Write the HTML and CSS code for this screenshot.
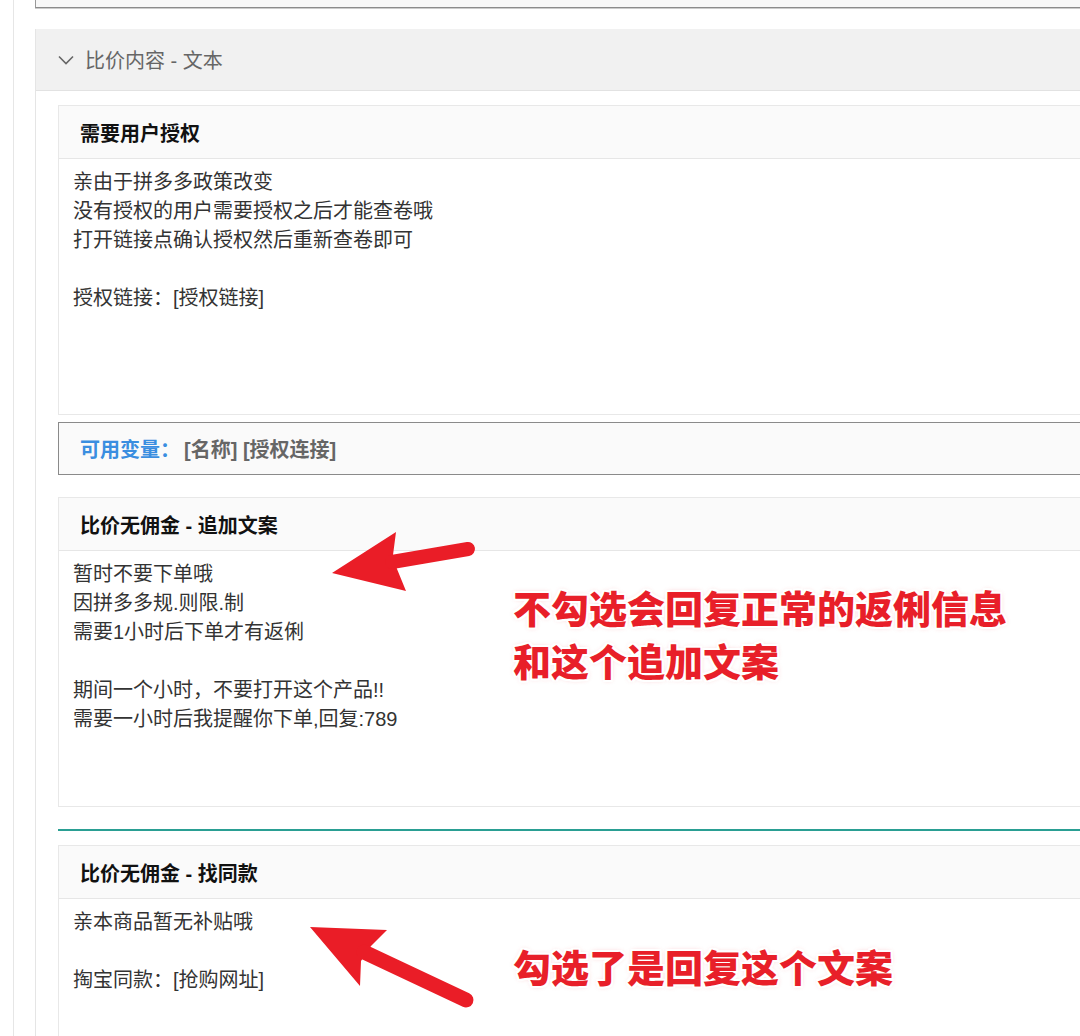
FILE: index.html
```html
<!DOCTYPE html>
<html lang="zh-CN">
<head>
    <meta charset="UTF-8">
    <meta name="viewport" content="width=device-width, initial-scale=1.0">
    <title>比价内容 - 文本</title>
    <link rel="stylesheet" href="styles.css">
</head>
<body>
    <div class="page">
        <div class="top-box"></div>

        <div class="section">
            <div class="section-head">
                <svg class="chevron" width="16" height="10" viewBox="0 0 16 10">
                    <polyline points="1,1.5 8,8.5 15,1.5" fill="none" stroke="#666" stroke-width="1.6"/>
                </svg>
                <span>比价内容 - 文本</span>
            </div>

            <div class="section-body">
                <div class="card">
                    <div class="card-head">需要用户授权</div>
                    <div class="card-body">亲由于拼多多政策改变
没有授权的用户需要授权之后才能查卷哦
打开链接点确认授权然后重新查卷即可

授权链接：[授权链接]</div>
                </div>

                <div class="vars">
                    <span class="vars-label">可用变量：</span>
                    <span class="vars-list">[名称] [授权连接]</span>
                </div>

                <div class="card card-gap">
                    <div class="card-head">比价无佣金 - 追加文案</div>
                    <div class="card-body">暂时不要下单哦
因拼多多规.则限.制
需要1小时后下单才有返俐

期间一个小时，不要打开这个产品!!
需要一小时后我提醒你下单,回复:789</div>
                </div>

                <div class="divider"></div>

                <div class="card">
                    <div class="card-head">比价无佣金 - 找同款</div>
                    <div class="card-body">亲本商品暂无补贴哦

掏宝同款：[抢购网址]</div>
                </div>
            </div>
        </div>
    </div>

    <!-- annotations drawn over the screenshot -->
    <svg class="arrows" width="1080" height="1036" viewBox="0 0 1080 1036">
        <polygon points="332,573 396,532 393,555 397,569 406,591" fill="#ea1d27"/>
        <line x1="392" y1="562" x2="468" y2="549" stroke="#ea1d27" stroke-width="14" stroke-linecap="round"/>
        <polygon points="310,927 387,930 371,946 361,961 360,986" fill="#ea1d27"/>
        <line x1="364" y1="952" x2="466" y2="1000" stroke="#ea1d27" stroke-width="15" stroke-linecap="round"/>
    </svg>

    <div class="note note-top">不勾选会回复正常的返俐信息<br>和这个追加文案</div>
    <div class="note note-bottom">勾选了是回复这个文案</div>
</body>
</html>
```

FILE: styles.css
```css
* {
    margin: 0;
    padding: 0;
    box-sizing: border-box;
}

body {
    font-family: "Liberation Sans", "Noto Sans CJK SC", sans-serif;
    background: #ffffff;
    color: #333333;
    overflow: hidden;
    position: relative;
    width: 1080px;
    height: 1036px;
}

.page {
    margin-left: 13px;
    border-left: 1px solid #e6e6e6;
    padding-left: 21px;
    width: 1100px;
    min-height: 1036px;
}

.top-box {
    height: 8px;
    background: #f8f8f8;
    border-left: 1px solid #999999;
    border-bottom: 1px solid #8c8c8c;
    box-shadow: 0 1px 0 #cccccc;
}

.section {
    margin-top: 21px;
    border-left: 1px solid #e5e5e5;
    min-height: 1000px;
}

.section-head {
    height: 62px;
    background: #f1f1f1;
    border-bottom: 1px solid #e2e2e2;
    display: flex;
    align-items: center;
    padding-left: 22px;
    gap: 11px;
    font-size: 20px;
    color: #666666;
}

.chevron {
    margin-top: 1px;
}

.section-body {
    padding: 14px 0 0 22px;
}

.card {
    border: 1px solid #e8e8e8;
    border-right: none;
}

.card-gap {
    margin-top: 22px;
}

.card-head {
    height: 53px;
    background: #fafafa;
    border-bottom: 1px solid #e6e6e6;
    display: flex;
    align-items: center;
    padding-left: 21px;
    font-size: 20px;
    font-weight: 700;
    color: #111111;
}

.card-body {
    height: 255px;
    padding: 9px 14px;
    font-size: 20px;
    line-height: 29px;
    white-space: pre-line;
    color: #333333;
}

.vars {
    margin-top: 7px;
    height: 53px;
    border: 1px solid #8a8a8a;
    border-right: none;
    background: #fafafa;
    display: flex;
    align-items: center;
    padding-left: 21px;
    font-size: 20px;
    font-weight: 700;
}

.vars-label {
    color: #3a8ee0;
}

.vars-list {
    color: #666666;
    margin-left: 4px;
}

.divider {
    margin-top: 22px;
    height: 2px;
    background: #2a9f93;
    margin-bottom: 14px;
}

.arrows {
    position: absolute;
    left: 0;
    top: 0;
}

.note {
    position: absolute;
    left: 513px;
    font-family: "Noto Sans CJK SC", sans-serif;
    font-weight: 900;
    font-size: 38px;
    line-height: 53px;
    color: #e81f29;
    white-space: nowrap;
    text-shadow:
        2px 0 0 #fff, -2px 0 0 #fff, 0 2px 0 #fff, 0 -2px 0 #fff,
        2px 2px 0 #fff, -2px -2px 0 #fff, 2px -2px 0 #fff, -2px 2px 0 #fff,
        0 0 5px rgba(232, 31, 41, 0.35);
}

.note-top {
    top: 580px;
}

.note-bottom {
    top: 939px;
}
```
